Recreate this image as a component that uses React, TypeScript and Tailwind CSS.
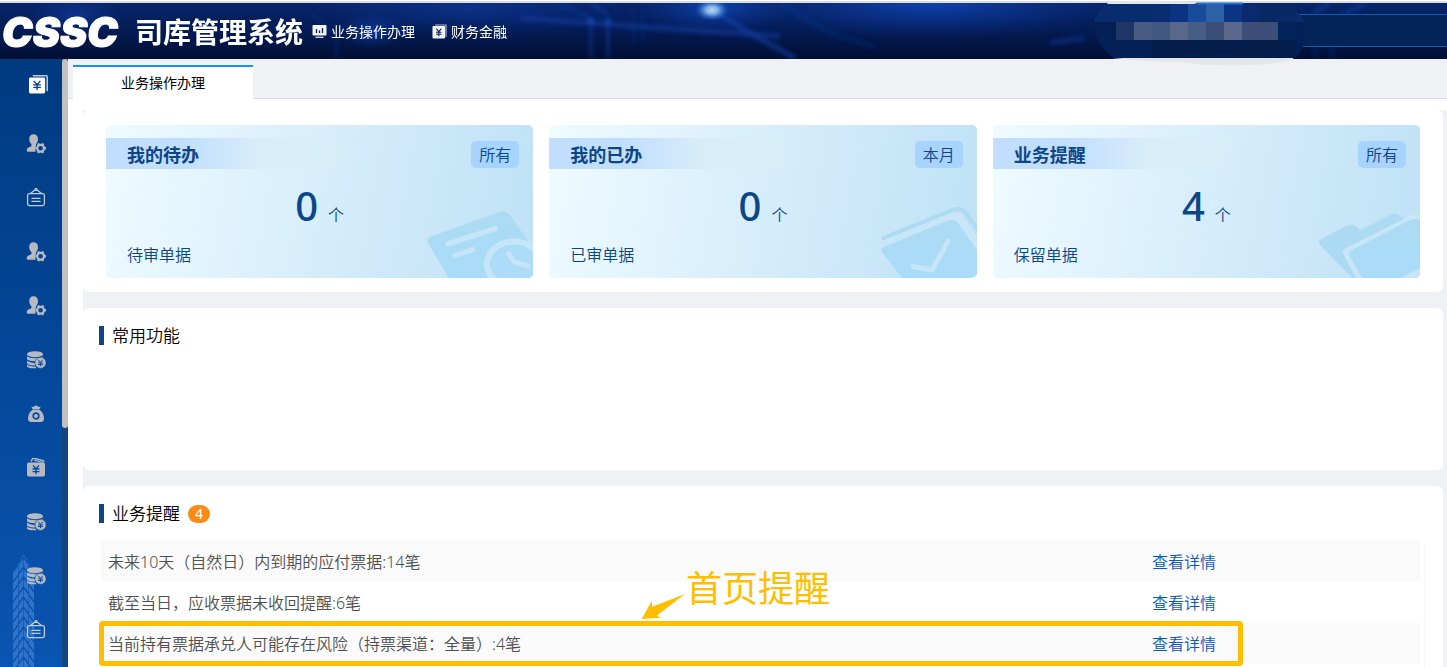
import type { ReactNode } from "react";

type IconProps = { className?: string };

function YenCardIcon({ className }: IconProps) {
  return (
    <svg viewBox="0 0 20 20" className={className} aria-hidden="true">
      <path d="M4 .8h14.2q1 0 1 1V17" fill="none" stroke="#b9cbe3" strokeWidth="1.6" />
      <rect x="0" y="2.6" width="17" height="16.8" rx="1.4" fill="#fff" />
      <path
        d="M5 6.2l3.500 4 3.500-4M4.500 10.400h8M4.500 13h8M8.500 10.200v5.600"
        fill="none"
        stroke="#0b468f"
        strokeWidth="1.500"
      />
    </svg>
  );
}

function UserGearIcon({ className }: IconProps) {
  return (
    <svg viewBox="0 0 20 20" className={className} fill="#b7bac2" aria-hidden="true">
      <path d="M7.500.2c2.700 0 4.500 1.900 4.500 4.800 0 2.300-.9 4.200-2 5.200v1.600c-1.200 1.300-1.400 3.800-.2 5.900H2c-1 0-1.500-.8-1.200-1.900.4-1.800 1.700-2.300 3.500-3 .7-.3 1.200-.7 1.200-1.200v-1.400C4.200 9.200 3.200 7.300 3.200 5 3.200 2.100 4.900.2 7.500.2z" />
      <g transform="translate(14.600 14.200)">
        <circle r="3.400" fill="none" stroke="#b7bac2" strokeWidth="2.200" />
        <path
          d="M-2.400-4.800l.6 1.600M2.400-4.800l-.6 1.600M-2.400 4.800l.6-1.600M2.400 4.800l-.6-1.600M-5.400 0h1.600M5.400 0H3.800"
          stroke="#b7bac2"
          strokeWidth="2.400"
        />
      </g>
    </svg>
  );
}

function NoticeIcon({ className }: IconProps) {
  return (
    <svg
      viewBox="0 0 20 20"
      className={className}
      fill="none"
      stroke="#bccbe4"
      strokeWidth="1.300"
      aria-hidden="true"
    >
      <rect x="1.600" y="5.600" width="16.800" height="12" rx="1.800" />
      <path d="M4.500 5.600l4.300-3.700M15.500 5.600l-4.300-3.700M5.500 10.300h9M5.500 13.300h9" />
      <circle cx="10" cy="1.600" r="1" />
    </svg>
  );
}

function CoinsIcon({ className }: IconProps) {
  return (
    <svg viewBox="0 0 20 20" className={className} aria-hidden="true">
      <ellipse cx="9" cy="4.200" rx="8" ry="3" fill="#b7bac2" />
      <path
        d="M1 6.300c2 2.600 14 2.700 16 0v3c-3 2.500-14 2.400-16 0zM1 10.500c1.500 1.900 5 2.500 9 2.400v2.700C5 15.700 2 15 1 13.300zM1 14.500c1.500 1.500 4.500 2 8.500 2l1 1.700C5 18.500 1.500 18 1 16.500z"
        fill="#b7bac2"
      />
      <circle cx="14.500" cy="12.800" r="5.600" fill="#b7bac2" stroke="#084a9c" strokeWidth=".7" />
      <path
        d="M12.300 9.900l2.200 2.500 2.200-2.500M12 12.900h5M12 14.600h5M14.500 12.500v3.700"
        fill="none"
        stroke="#084a9c"
        strokeWidth="1"
      />
    </svg>
  );
}

function MoneyBagIcon({ className }: IconProps) {
  return (
    <svg viewBox="0 0 20 20" className={className} fill="#b7bac2" aria-hidden="true">
      <path d="M5.200 2.600c1.500.6 2.300.4 3.200-.4.900-.8 2.300-.8 3.200 0 .9.800 1.700 1 3.200.4L13.200 5.400H6.800z" />
      <path d="M6.300 6h7.400c3 2 4.300 5.400 4.300 8.500 0 2.300-1 3.500-3.200 3.500H5.200C3 18 2 16.800 2 14.500c0-3.100 1.300-6.500 4.300-8.500z" />
      <circle cx="10" cy="12" r="2.800" stroke="#084c9f" strokeWidth="1.700" />
    </svg>
  );
}

function WalletIcon({ className }: IconProps) {
  return (
    <svg viewBox="0 0 20 20" className={className} aria-hidden="true">
      <path d="M5 3.500L7 0l10.500 2.800v1.700" fill="none" stroke="#b7bac2" strokeWidth="1.500" />
      <path d="M8 2l8.500 2.500" stroke="#b7bac2" strokeWidth="1.200" />
      <rect x="1" y="4.600" width="18" height="14" rx="1.800" fill="#b7bac2" />
      <path
        d="M7 7.400l3 3.300 3-3.300M6.500 11h7M6.500 13.600h7M10 10.700v5.600"
        fill="none"
        stroke="#084c9f"
        strokeWidth="1.400"
      />
    </svg>
  );
}

function MonitorIcon() {
  return (
    <svg width="15" height="15" viewBox="0 0 15 15" aria-hidden="true">
      <rect x=".5" y="1" width="14" height="10.500" rx="1" fill="#f1f4fa" />
      <path d="M3.500 13.300h8" stroke="#c9d2e6" strokeWidth="1.400" />
      <path d="M4.500 5v4M7.500 6.500V9M10.500 4v5" stroke="#0a2050" strokeWidth="1.300" />
    </svg>
  );
}

function FinanceIcon() {
  return (
    <svg width="15" height="15" viewBox="0 0 15 15" aria-hidden="true">
      <path d="M3 1h11v12" fill="none" stroke="#aab6d2" strokeWidth="1.200" />
      <rect x=".5" y="2" width="12.500" height="12.500" rx="1" fill="#f1f4fa" />
      <path
        d="M4.300 4.700l2.500 3 2.500-3M4 8.200h5.500M4 10.300h5.500M6.800 8v4.300"
        fill="none"
        stroke="#0a2050"
        strokeWidth="1.100"
      />
    </svg>
  );
}

function TaskArt() {
  return (
    <>
      <path d="M3 39Q1 34 7 32L73 8.500Q81 6 85 11L112 50V74H24z" fill="url(#artFill)" />
      <path d="M22.500 40L70.500 24.500M30 51.500L48 45.500" stroke="#c6e5f8" strokeWidth="5" strokeLinecap="round" />
      <ellipse cx="89" cy="60" rx="27" ry="22.500" fill="#acdcf7" stroke="#c6e5f8" strokeWidth="6" />
      <path
        d="M83.500 49.500L89 58l14 4"
        fill="none"
        stroke="#c6e5f8"
        strokeWidth="5"
        strokeLinecap="round"
        strokeLinejoin="round"
      />
    </>
  );
}

function DoneArt() {
  return (
    <>
      <path d="M17 37L84 9.500Q90 8 93 12L109 34V52L86 16L14 43z" fill="#c8e6f8" />
      <path
        d="M14.500 34L82 6.500Q91 3 96 8L109 26"
        fill="none"
        stroke="#abdaf2"
        strokeWidth="4"
        strokeLinecap="round"
      />
      <path d="M12 47Q12 44 16 42.500L79 16.500Q85 14 89 19L108 46V70L99 74H33z" fill="url(#artFill)" />
      <path
        d="M44 62.500L63 66L79 37.500"
        fill="none"
        stroke="#c6e5f8"
        strokeWidth="5"
        strokeLinecap="round"
        strokeLinejoin="round"
      />
    </>
  );
}

function FolderArt() {
  return (
    <>
      <path
        d="M8 41Q5 37 10 34.500L34 22Q41 19 45 23.500L48 26.500L79 10.500Q85 8 88 12L92 15.500L108 12V74H40z"
        fill="#abdaf2"
      />
      <path d="M31 49Q30 46 34 44L92 15L99 11H108V74H44z" fill="#c8e6f8" />
      <path d="M37 51Q36 48 39 46.500L96 17Q102 13.500 108 16V64L88 74H50z" fill="url(#artFill)" />
    </>
  );
}

const menuItems = [
  { label: "用户设置", Icon: UserGearIcon },
  { label: "公告", Icon: NoticeIcon },
  { label: "角色设置", Icon: UserGearIcon },
  { label: "权限设置", Icon: UserGearIcon },
  { label: "资金", Icon: CoinsIcon },
  { label: "融资", Icon: MoneyBagIcon },
  { label: "账户", Icon: WalletIcon },
  { label: "结算", Icon: CoinsIcon },
  { label: "票据", Icon: CoinsIcon },
  { label: "通知", Icon: NoticeIcon },
];

const cards: { title: string; tag: string; count: number; note: string; art: ReactNode }[] = [
  { title: "我的待办", tag: "所有", count: 0, note: "待审单据", art: <TaskArt /> },
  { title: "我的已办", tag: "本月", count: 0, note: "已审单据", art: <DoneArt /> },
  { title: "业务提醒", tag: "所有", count: 4, note: "保留单据", art: <FolderArt /> },
];

const reminders = [
  "未来10天（自然日）内到期的应付票据:14笔",
  "截至当日，应收票据未收回提醒:6笔",
  "当前持有票据承兑人可能存在风险（持票渠道：全量）:4笔",
];

// 18px cells that cover the account name, one array per row
const maskRows = [
  ["#082d6f", "#082d6f", "#082d70", "#0a3384", "#184c9b", "#2c62a5", "#0c3485", "#092b6d", "#082866", "#082866"],
  ["#1f3767", "#475c7f", "#3f5980", "#5a678a", "#475e84", "#3c4f78", "#5a688b", "#3d4f78", "#3d4f78", "#04235a"],
  ["#051f57", "#051f57", "#041d4b", "#041d4b", "#031c49", "#031c49", "#031c49", "#031c49", "#041d4b", "#041d4b"],
];

function HeaderBackdrop() {
  return (
    <svg
      className="absolute inset-x-0 top-0 h-[66px] w-full"
      viewBox="0 0 1447 66"
      preserveAspectRatio="none"
      aria-hidden="true"
    >
      <defs>
        <linearGradient id="headBase" x1="0" y1="0" x2="0" y2="1">
          <stop offset="0" stopColor="#07256a" />
          <stop offset=".5" stopColor="#041b54" />
          <stop offset="1" stopColor="#010f35" />
        </linearGradient>
        <radialGradient id="glow">
          <stop offset="0" stopColor="#1148c0" stopOpacity=".8" />
          <stop offset="1" stopColor="#0c3aa0" stopOpacity="0" />
        </radialGradient>
        <radialGradient id="spark">
          <stop offset="0" stopColor="#b9d8f2" />
          <stop offset=".35" stopColor="#7fb2e6" />
          <stop offset="1" stopColor="#1a62d6" stopOpacity="0" />
        </radialGradient>
        <filter id="soft" filterUnits="userSpaceOnUse" x="0" y="-20" width="1447" height="110">
          <feGaussianBlur stdDeviation="2" />
        </filter>
        <clipPath id="headClip">
          <rect y="3" width="1447" height="56" />
        </clipPath>
      </defs>
      <rect y="1" width="1447" height="2" fill="#dcdddd" />
      <g clipPath="url(#headClip)">
        <rect y="3" width="1447" height="56" fill="url(#headBase)" />
        <ellipse cx="930" cy="3" rx="190" ry="36" fill="url(#glow)" />
        <ellipse cx="470" cy="8" rx="170" ry="30" fill="url(#glow)" opacity=".5" />
        <ellipse cx="715" cy="6" rx="80" ry="30" fill="url(#glow)" />
        <ellipse cx="372" cy="31" rx="34" ry="18" fill="url(#glow)" opacity=".8" />
        <ellipse cx="75" cy="15" rx="50" ry="20" fill="url(#glow)" opacity=".6" />
        <g filter="url(#soft)" fill="none" stroke="#1243ae">
          <path d="M520 18L590 23L700 31L780 36" strokeWidth="6" opacity=".45" />
          <path d="M560 4L588 17Q591 19 591 24V58" strokeWidth="4" opacity=".35" />
          <path d="M590 3L604 12Q608 15 608 22V58" strokeWidth="4" opacity=".4" />
          <path d="M628 5L634 20V45M643 8V42" strokeWidth="3" opacity=".2" />
          <path d="M712 10L755 36L795 58" strokeWidth="5" opacity=".55" />
          <path d="M780 3L830 33L875 47" strokeWidth="6" opacity=".2" />
          <path d="M310 14Q345 34 335 58" strokeWidth="3" opacity=".3" />
          <path d="M1050 43L1085 38M1312 14L1330 3M1342 14L1368 3" strokeWidth="5" opacity=".4" />
          <path d="M1315 46V58M1332 46V58" strokeWidth="4" opacity=".3" />
        </g>
        <circle cx="591" cy="21" r="3" fill="#1c56d0" opacity=".7" filter="url(#soft)" />
        <circle cx="608" cy="22" r="3" fill="#1850c8" opacity=".6" filter="url(#soft)" />
        <ellipse cx="712" cy="10" rx="17" ry="11" fill="url(#spark)" />
        <rect x="1299" y="15" width="148" height="31" fill="#042356" />
        <path d="M1299 14.500h148M1303 46.500h144" stroke="#0d5cb5" />
      </g>
      <path
        d="M1112 58Q1150 62 1180 62Q1205 66 1240 65.500Q1285 64 1294 58zM1107 4Q1110 0 1120 1Q1190 0 1197 4z"
        fill="#e3e6ea"
      />
      <path d="M1115 58Q1094 46 1094 22Q1098 8 1107 4H1284Q1302 10 1305 40Q1302 52 1294 58z" fill="#051f57" />
      <path d="M1094 22Q1098 8 1107 4H1284Q1300 10 1304 22z" fill="#082c6e" />
      {maskRows.map((row, y) =>
        row.map((color, x) => (
          <rect key={`${x}-${y}`} x={1116 + x * 18} y={4 + y * 18} width="18" height="18" fill={color} />
        )),
      )}
      <path d="M1197 3.500h46" stroke="#1e70d4" strokeWidth="2" />
    </svg>
  );
}

function TopBar() {
  return (
    <header className="relative z-10 h-[59px] shrink-0">
      <HeaderBackdrop />
      <div className="relative flex h-full items-center pt-1 text-white">
        <span className="w-[135px] pl-0.5 font-['Inter'] text-[41px] leading-[54px] font-black italic [-webkit-text-stroke:1px_white]">
          CSSC
        </span>
        <h1 className="text-[28px] leading-[54px] font-bold whitespace-nowrap">司库管理系统</h1>
        <nav className="ml-[9px] flex items-center gap-[17px] text-sm">
          <a href="#business" className="flex items-center gap-1 whitespace-nowrap">
            <MonitorIcon />
            业务操作办理
          </a>
          <a href="#finance" className="flex items-center gap-1 whitespace-nowrap">
            <FinanceIcon />
            财务金融
          </a>
        </nav>
      </div>
    </header>
  );
}

function SideMenu() {
  return (
    <aside className="flex shrink-0 overflow-hidden">
      <nav className="relative w-[62px] bg-linear-to-b from-[#003a80] to-[#0a55b2]">
        <svg className="absolute bottom-0 left-[13px]" width="21" height="113" viewBox="0 0 21 113" aria-hidden="true">
          <defs>
            <pattern id="chevrons" width="21" height="10" patternUnits="userSpaceOnUse">
              <path
                d="M0 8L5 1M0 18L5 11M5.500 10L10.500 3M5.500 0L10.500 -7M10.500 3L15.500 10M10.500 -7L15.500 0M16 1L21 8M16 11L21 18"
                stroke="#0a4fa8"
                strokeWidth="1.300"
              />
              <path d="M5.500 0V10M10.500 0V10M15.500 0V10" stroke="#0a4fa8" strokeWidth=".6" />
            </pattern>
          </defs>
          <path d="M0 18L10.500 0L21 18V113H0z" fill="#2d74cb" />
          <path d="M0 18L10.500 0L21 18V113H0z" fill="url(#chevrons)" />
        </svg>
        <a href="#home" aria-label="首页" className="relative flex h-[58px] items-end justify-center pb-[23px] pl-[14px]">
          <YenCardIcon className="size-[19px]" />
        </a>
        {menuItems.map(({ label, Icon }) => (
          <a
            key={label}
            href={`#${label}`}
            aria-label={label}
            className="relative flex h-[54px] items-center justify-center pl-2.5"
          >
            <Icon className="size-5" />
          </a>
        ))}
      </nav>
      <div className="w-1.5 bg-[#11467f]">
        <div className="h-[369px] rounded-[3px] bg-[#c1c1c4]" />
      </div>
    </aside>
  );
}

function SectionTitle({ children }: { children: ReactNode }) {
  return (
    <div className="flex h-[19px] items-center">
      <span className="mr-2 h-full w-[5px] bg-[#0d4687]" />
      {children}
    </div>
  );
}

export default function App() {
  return (
    <div className="flex h-screen flex-col overflow-hidden bg-white font-['Noto_Sans','Noto_Sans_CJK_SC',sans-serif] text-black">
      <svg width="0" height="0" className="absolute" aria-hidden="true">
        <linearGradient id="artFill" x1="0" y1="0" x2="0" y2="1">
          <stop offset="0" stopColor="#acdaf2" />
          <stop offset="1" stopColor="#a9dcf9" />
        </linearGradient>
      </svg>
      <TopBar />
      <div className="flex min-h-0 flex-1">
        <SideMenu />
        <main className="flex min-w-0 flex-1 flex-col">
          <div className="flex h-10 shrink-0 items-end bg-[#f0f1f5]">
            <span className="h-full w-[5px] border-b border-[#dcdce8]" />
            <button
              type="button"
              className="h-[34px] w-[180px] border-t-2 border-[#1890ff] bg-white text-sm"
            >
              业务操作办理
            </button>
            <span className="h-full flex-1 border-b border-[#dcdce8]" />
          </div>

          <div className="mt-[11px] ml-[15px] flex flex-1 flex-col gap-4 bg-[#f0f1f5] pr-1">
            <section className="grid grid-cols-3 gap-4 rounded-md bg-white px-[23px] pt-[15px] pb-[14px]">
              {cards.map((card) => (
                <article
                  key={card.title}
                  className="relative overflow-hidden rounded-[5px] bg-linear-100 from-[#effbff] via-[#d6edfb] to-[#bfe1f6] pt-[13px] pb-[13px] text-[#0d4687]"
                >
                  <svg
                    className="absolute right-0 bottom-0"
                    width="108"
                    height="74"
                    viewBox="0 0 108 74"
                    aria-hidden="true"
                  >
                    {card.art}
                  </svg>
                  <div className="relative flex h-[31px] items-center justify-between bg-linear-to-r from-[#c1deff] from-18% via-[#d8edf8] via-36% to-transparent to-60% pt-0.5 pr-[14px] pl-[21px]">
                    <h2 className="text-lg font-bold">{card.title}</h2>
                    <button type="button" className="h-[27px] rounded-[5px] bg-[#a6d4ff] px-2 text-base font-[350]">
                      {card.tag}
                    </button>
                  </div>
                  <p className="relative flex h-[76px] items-center justify-center pb-0.5">
                    <span className="flex items-baseline gap-2.5">
                      <span className="text-[40px] leading-[48px] font-medium">{card.count}</span>
                      <span className="text-base font-[350]">个</span>
                    </span>
                  </p>
                  <p className="relative h-5 pl-[21px] text-base leading-5 font-[350]">{card.note}</p>
                </article>
              ))}
            </section>

            <section className="h-[162px] rounded-md bg-white px-4 pt-[18px]">
              <SectionTitle>
                <h2 className="text-[17px] font-[350]">常用功能</h2>
              </SectionTitle>
            </section>

            <section className="flex-1 rounded-t-md bg-white px-4 pt-[18px]">
              <SectionTitle>
                <h2 className="text-[17px] font-[350]">业务提醒</h2>
                <span className="ml-2 h-[18px] w-[22px] rounded-full bg-[#fa8c16] text-center text-sm leading-[18px] text-white">
                  4
                </span>
              </SectionTitle>
              <div className="relative mx-0.5 mt-[18px] rounded-md border-r border-[#f7f7f7] pr-1">
                <table className="w-full table-fixed text-left text-base font-[350]">
                  <tbody>
                    {reminders.map((text) => (
                      <tr key={text} className="h-[41px] odd:bg-[#fafafa]">
                        <td className="w-[79%] pl-[7px] text-[#505050]">{text}</td>
                        <td className="pl-[9px]">
                          <a href="#detail" className="text-[#0958c0]">
                            查看详情
                          </a>
                        </td>
                      </tr>
                    ))}
                    <tr className="h-[41px]">
                      <td colSpan={2} />
                    </tr>
                  </tbody>
                </table>
                <div className="pointer-events-none absolute top-20 right-[181px] -left-0.5 h-[45px] rounded-[4px] border-[5px] border-[#ffbf00]" />
                <div className="pointer-events-none absolute top-5 left-[540px] flex items-end text-[#ffbf00]">
                  <svg className="-mb-1" width="45" height="28" viewBox="0 0 45 28" fill="currentColor" aria-hidden="true">
                    <path d="M.7 26L10.700 8L11 13.700L44 1L15.700 22.700L20 24.700z" />
                  </svg>
                  <span className="text-4xl leading-[56px]">首页提醒</span>
                </div>
              </div>
            </section>
          </div>
        </main>
      </div>
    </div>
  );
}
